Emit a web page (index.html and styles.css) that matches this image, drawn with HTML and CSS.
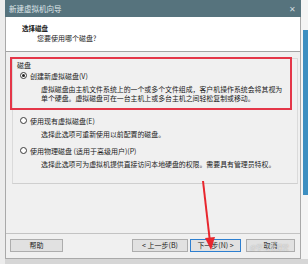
FILE: index.html
```html
<!DOCTYPE html>
<html lang="zh">
<head>
<meta charset="utf-8">
<title>新建虚拟机向导</title>
<link rel="stylesheet" href="styles.css">
</head>
<body>
<div class="screen">
  <div class="side-left"></div>
  <div class="dialog">
    <div class="titlebar">
      <span class="title">新建虚拟机向导</span>
      <span class="close">✕</span>
    </div>
    <div class="header">
      <div class="h-title">选择磁盘</div>
      <div class="h-sub">您要使用哪个磁盘?</div>
    </div>
    <div class="body">
      <div class="group">
        <div class="group-label">磁盘</div>
        <div class="option">
          <span class="radio checked"></span><span>创建新虚拟磁盘(V)</span>
        </div>
        <div class="desc first">虚拟磁盘由主机文件系统上的一个或多个文件组成，客户机操作系统会将其视为<br>单个硬盘。虚拟磁盘可在一台主机上或多台主机之间轻松复制或移动。</div>
        <div class="option">
          <span class="radio"></span><span>使用现有虚拟磁盘(E)</span>
        </div>
        <div class="desc">选择此选项可重新使用以前配置的磁盘。</div>
        <div class="option">
          <span class="radio"></span><span>使用物理磁盘 (适用于高级用户)(P)</span>
        </div>
        <div class="desc">选择此选项可为虚拟机提供直接访问本地硬盘的权限。需要具有管理员特权。</div>
      </div>
    </div>
    <div class="footer">
      <button class="btn help">帮助</button>
      <div class="spacer"></div>
      <button class="btn prev">&lt; 上一步(B)</button>
      <button class="btn next">下一步(N) &gt;</button>
      <button class="btn cancel">取消</button>
    </div>
  </div>
  <div class="side-right"><div class="blue"></div></div>
  <div class="highlight"></div>
  <svg class="arrow" width="30" height="80" viewBox="0 0 30 80">
    <line x1="7" y1="1" x2="14" y2="62" stroke="#e8262e" stroke-width="2"/>
    <polygon points="9,58 19,57 15,70" fill="#e8262e"/>
  </svg>
  <span class="watermark">@学习微课堂</span>
</div>
</body>
</html>
```

FILE: styles.css
```css
* { box-sizing: border-box; }
html, body { margin: 0; padding: 0; }
body {
  width: 308px;
  height: 264px;
  overflow: hidden;
  background: #f2f2f2;
  font-family: "Noto Sans CJK SC", "Microsoft YaHei", sans-serif;
  color: #1a1a1a;
}
.screen {
  position: relative;
  width: 308px;
  height: 264px;
  display: flex;
  align-items: flex-start;
  background: #d6d6d6;
}
.side-left {
  width: 5px;
  height: 264px;
  background: #ececec;
}
.dialog {
  width: 296px;
  height: 259px;
  display: flex;
  flex-direction: column;
  background: #f0f0f0;
  border-left: 1px solid #a9a9a9;
  border-right: 1px solid #a9a9a9;
  border-bottom: 1px solid #a9a9a9;
}
.titlebar {
  height: 17px;
  flex: none;
  background: #56737d;
  color: #dfe7ea;
  display: flex;
  align-items: center;
  justify-content: space-between;
  padding: 0 5px 0 4px;
  margin-left: -1px;
  margin-right: -1px;
}
.title { font-size: 7.5px; line-height: 1; }
.close { font-size: 8px; color: #cfdadd; line-height: 1; }
.header {
  height: 35px;
  flex: none;
  background: #ffffff;
  border-bottom: 1px solid #a3a3a3;
  padding: 6px 0 0 16px;
}
.h-title { font-size: 6.5px; font-weight: bold; line-height: 10px; }
.h-sub { font-size: 7px; line-height: 11px; padding-left: 15px; }
.body {
  flex: 1;
  padding: 6px 2px 0 6px;
}
.group {
  height: 126px;
  border: 1px solid #dadada;
  border-bottom-color: #cfcfcf;
  padding: 1px 0 0 4px;
  font-size: 7px;
}
.group-label { line-height: 10px; }
.option {
  display: flex;
  align-items: center;
  height: 11px;
  margin-left: 3px;
}
.radio {
  width: 7px;
  height: 7px;
  border: 1px solid #3a3a3a;
  border-radius: 50%;
  margin-right: 3px;
  position: relative;
  background: #fff;
}
.radio.checked::after {
  content: "";
  position: absolute;
  left: 1px; top: 1px;
  width: 3px; height: 3px;
  border-radius: 50%;
  background: #222;
}
.desc {
  font-size: 6.9px;
  line-height: 9px;
  padding-left: 24px;
  margin: 4px 0 6px;
  white-space: nowrap;
}
.desc.first { margin-bottom: 12px; }
.footer {
  margin-top: auto;
  height: 25px;
  flex: none;
  border-top: 1px solid #c3c3c3;
  display: flex;
  align-items: flex-start;
  padding: 5px 5px 0 4px;
}
.spacer { flex: 1; }
.btn {
  height: 13px;
  padding: 0;
  border: 1px solid #adadad;
  background: #e1e1e1;
  font-family: inherit;
  font-size: 7px;
  line-height: 11px;
  color: #222;
}
.btn.help { width: 53px; }
.btn.prev { width: 56px; }
.btn.next { width: 51px; margin-left: 2px; border-color: #2d7fd0; }
.btn.cancel { width: 49px; margin-left: 5px; }
.side-right {
  width: 7px;
  height: 259px;
  background: #f4f4f4;
  padding-top: 30px;
  padding-left: 2px;
}
.blue { width: 5px; height: 165px; background: #3d8fc1; }
.highlight {
  position: absolute;
  left: 10px; top: 57px;
  width: 282px; height: 53px;
  border: 2px solid #e43648;
}
.arrow { position: absolute; left: 196px; top: 180px; }
.watermark {
  position: absolute;
  left: 250px; top: 243px;
  font-size: 6.5px;
  line-height: 8px;
  color: rgba(255,255,255,0.7);
  text-shadow: 0 0 1px rgba(90,90,90,0.6);
}
```
